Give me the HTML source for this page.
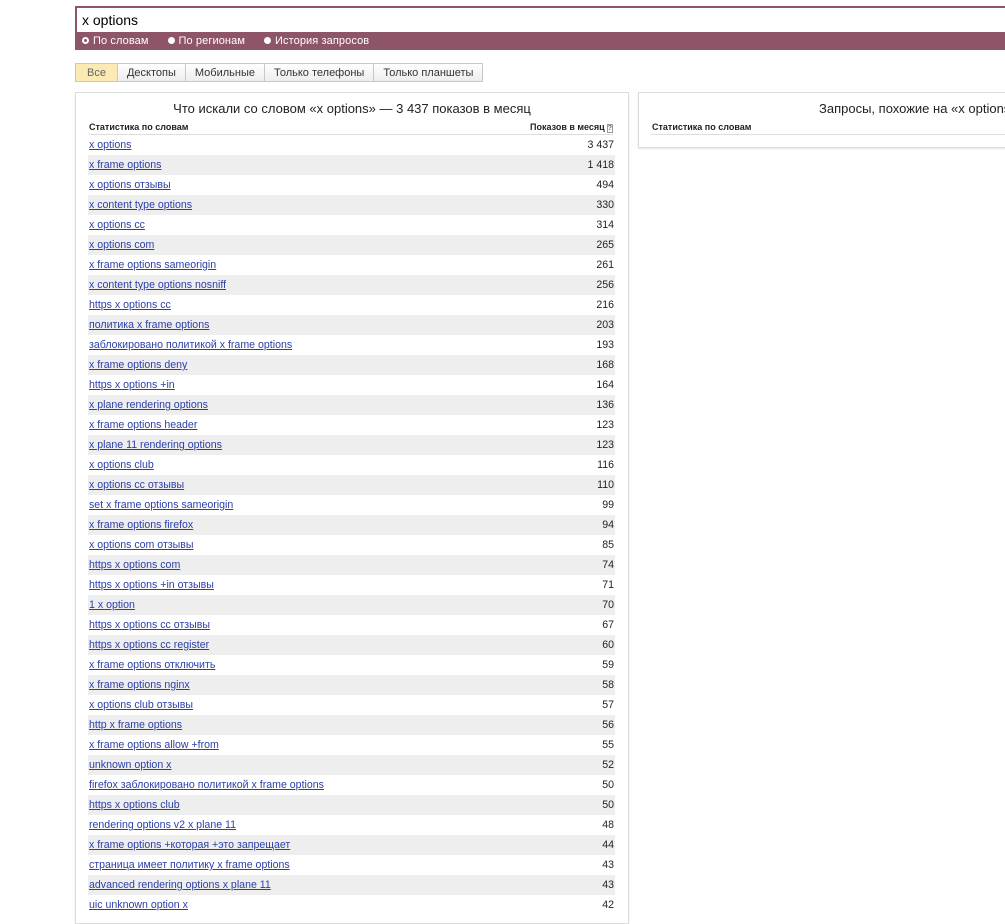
<!DOCTYPE html>
<html><head><meta charset="utf-8"><style>
body{margin:0;background:#fff;font-family:"Liberation Sans",Arial,sans-serif;width:1005px;height:909px;overflow:hidden;position:relative}
.search{position:absolute;left:75px;top:6px;width:940px;height:44px;background:#8e5468}
.search .in{position:absolute;left:2px;top:2px;right:0;height:24px;background:#fff;font-size:14px;line-height:24px;padding-left:5px;color:#000}
.radios{position:absolute;left:7px;top:29px;font-size:11px;color:#fff;white-space:nowrap;letter-spacing:0.1px}
.radios span{margin-right:19px}
.dot{display:inline-block;width:7px;height:7px;border-radius:50%;background:#fff;margin-right:4px;vertical-align:0}
.dot.o{background:#8e5468;border:2px solid #fff;width:3px;height:3px}
.tabs{position:absolute;left:75px;top:63px;height:19px;display:flex;font-size:11px}
.tabs div{border:1px solid #c8c8c8;border-left:none;padding:0 9px;line-height:18px;background:linear-gradient(#fff,#eee);color:#333}
.tabs div:first-child{border-left:1px solid #c8c8c8;background:#fbeab4;color:#666;padding:0 11px}
.panel{position:absolute;border:1px solid #ddd;box-shadow:0 1px 2px rgba(0,0,0,.1);background:#fff}
.title{font-size:13px;color:#222;text-align:center;position:absolute;top:8px;width:100%}
.hdr{position:absolute;top:29px;left:13px;right:13px;font-size:9px;font-weight:bold;color:#222;border-bottom:1px solid #ddd;height:12px}
.rows{position:absolute;left:12px;top:42px;width:527px}
.r{height:20px;line-height:20px;font-size:10.6px;position:relative}
.r:nth-child(even){background:#eee}
.r a{color:#2b3fa8;text-decoration:underline;margin-left:1px}
.r b{position:absolute;right:1px;font-weight:normal;color:#222}
</style></head><body>
<div class="search"><div class="in">x options</div>
<div class="radios"><span><i class="dot o"></i>По словам</span><span><i class="dot"></i>По регионам</span><span><i class="dot"></i>История запросов</span></div></div>
<div class="tabs"><div>Все</div><div>Десктопы</div><div>Мобильные</div><div>Только телефоны</div><div>Только планшеты</div></div>
<div class="panel" style="left:75px;top:92px;width:552px;height:830px">
<div class="title">Что искали со словом «x options» — 3 437 показов в месяц</div>
<div class="hdr" style="right:15px">Статистика по словам<span style="position:absolute;right:0">Показов в месяц<span style="border:1px solid #999;font-size:7px;margin-left:2px;color:#666">?</span></span></div>
<div class="rows">
<div class="r"><a>x options</a><b>3 437</b></div>
<div class="r"><a>x frame options</a><b>1 418</b></div>
<div class="r"><a>x options отзывы</a><b>494</b></div>
<div class="r"><a>x content type options</a><b>330</b></div>
<div class="r"><a>x options cc</a><b>314</b></div>
<div class="r"><a>x options com</a><b>265</b></div>
<div class="r"><a>x frame options sameorigin</a><b>261</b></div>
<div class="r"><a>x content type options nosniff</a><b>256</b></div>
<div class="r"><a>https x options cc</a><b>216</b></div>
<div class="r"><a>политика x frame options</a><b>203</b></div>
<div class="r"><a>заблокировано политикой x frame options</a><b>193</b></div>
<div class="r"><a>x frame options deny</a><b>168</b></div>
<div class="r"><a>https x options +in</a><b>164</b></div>
<div class="r"><a>x plane rendering options</a><b>136</b></div>
<div class="r"><a>x frame options header</a><b>123</b></div>
<div class="r"><a>x plane 11 rendering options</a><b>123</b></div>
<div class="r"><a>x options club</a><b>116</b></div>
<div class="r"><a>x options cc отзывы</a><b>110</b></div>
<div class="r"><a>set x frame options sameorigin</a><b>99</b></div>
<div class="r"><a>x frame options firefox</a><b>94</b></div>
<div class="r"><a>x options com отзывы</a><b>85</b></div>
<div class="r"><a>https x options com</a><b>74</b></div>
<div class="r"><a>https x options +in отзывы</a><b>71</b></div>
<div class="r"><a>1 x option</a><b>70</b></div>
<div class="r"><a>https x options cc отзывы</a><b>67</b></div>
<div class="r"><a>https x options cc register</a><b>60</b></div>
<div class="r"><a>x frame options отключить</a><b>59</b></div>
<div class="r"><a>x frame options nginx</a><b>58</b></div>
<div class="r"><a>x options club отзывы</a><b>57</b></div>
<div class="r"><a>http x frame options</a><b>56</b></div>
<div class="r"><a>x frame options allow +from</a><b>55</b></div>
<div class="r"><a>unknown option x</a><b>52</b></div>
<div class="r"><a>firefox заблокировано политикой x frame options</a><b>50</b></div>
<div class="r"><a>https x options club</a><b>50</b></div>
<div class="r"><a>rendering options v2 x plane 11</a><b>48</b></div>
<div class="r"><a>x frame options +которая +это запрещает</a><b>44</b></div>
<div class="r"><a>страница имеет политику x frame options</a><b>43</b></div>
<div class="r"><a>advanced rendering options x plane 11</a><b>43</b></div>
<div class="r"><a>uic unknown option x</a><b>42</b></div>
</div></div>
<div class="panel" style="left:638px;top:92px;width:380px;height:54px">
<div class="title" style="text-align:left;left:180px;width:auto;white-space:nowrap">Запросы, похожие на «x options»</div>
<div class="hdr" style="right:0">Статистика по словам</div>
</div>
</body></html>
